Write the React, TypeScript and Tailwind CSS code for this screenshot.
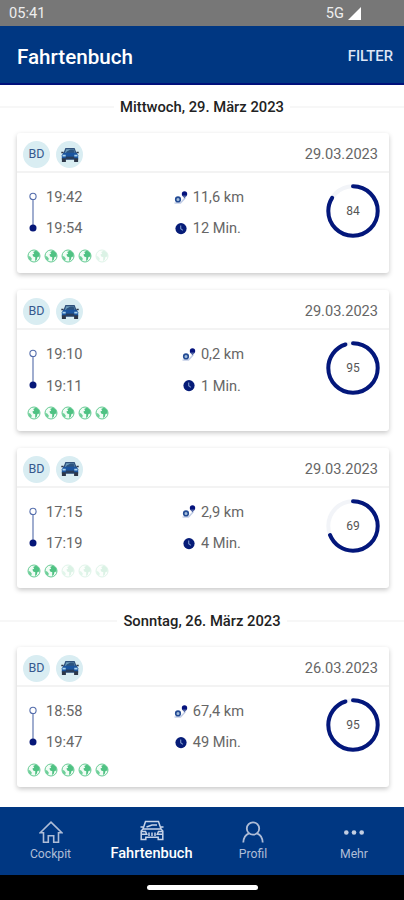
import { clsx } from "clsx";

const days = [
  {
    label: "Mittwoch, 29. März 2023",
    trips: [
      { date: "29.03.2023", start: "19:42", end: "19:54", distance: "11,6 km", duration: "12 Min.", score: 84, eco: 4 },
      { date: "29.03.2023", start: "19:10", end: "19:11", distance: "0,2 km", duration: "1 Min.", score: 95, eco: 5 },
      { date: "29.03.2023", start: "17:15", end: "17:19", distance: "2,9 km", duration: "4 Min.", score: 69, eco: 2 },
    ],
  },
  {
    label: "Sonntag, 26. März 2023",
    trips: [
      { date: "26.03.2023", start: "18:58", end: "19:47", distance: "67,4 km", duration: "49 Min.", score: 95, eco: 5 },
    ],
  },
];

type Trip = (typeof days)[number]["trips"][number];

function CarBadge() {
  return (
    <svg viewBox="0 0 18 16" className="h-4 w-[18px]">
      <path d="M4.4 1h9.2l2 5H2.4z" fill="#31527c" />
      <path d="M5.2 2.2h7.6l1.2 3.7H4z" fill="#6f9fbd" />
      <path d="M5.6 4.4 9.5 2.4h3.1l1 3.5H5z" fill="#2c5480" />
      <path d="M2.3 5.8h13.4l1.5 2.4v4.3H.8V8.2z" fill="#1b559f" />
      <path d="M.3 4.8h2.2v1.5H.3zM15.5 4.8h2.2v1.5h-2.2zM.9 11.2h4V15h-4zM13.1 11.2h4V15h-4z" fill="#2d3748" />
      <path d="M4.8 9.6h8.4v2.9H4.8z" fill="#283e5c" />
      <path d="M1.5 7.8h3.2v1.7H1.5zM13.3 7.8h3.2v1.7h-3.2z" fill="#a9d3ed" />
    </svg>
  );
}

function RouteIcon() {
  return (
    <svg viewBox="0 0 14 14" className="size-3.5">
      <path d="M.5 12h6l4.8-5.2" fill="none" stroke="#c3cee6" strokeWidth="1.6" />
      <circle cx="4" cy="8.4" r="2.3" fill="#a3bddb" stroke="#234b94" strokeWidth="1.6" />
      <circle cx="10.5" cy="3" r="2.7" fill="#05137d" />
      <path d="m8.2 4.6 2.3 2.9 2.3-2.9z" fill="#5366a5" />
    </svg>
  );
}

function ClockIcon() {
  return (
    <svg viewBox="0 0 14 14" className="size-3.5">
      <circle cx="7" cy="6.6" r="5.6" fill="#061c78" />
      <path d="M6.7 3.4v3.4l2.2 1.6" fill="none" stroke="#7f99cb" strokeWidth="1.1" />
    </svg>
  );
}

function Globe({ active }: { active: boolean }) {
  return (
    <svg viewBox="0 0 14 14" className={clsx("size-3.5", !active && "opacity-20")}>
      <circle cx="7" cy="7" r="6" fill="#f1fcf5" stroke="#66cb94" strokeWidth="1" />
      <path d="M6.2 3.1 9 1.5l3.1 2.6.6 3.5-2.2.4-.8 3-1.6.9.2-3.7-2.1-.8-.8-1.8 1.8-.8z" fill="#4fc283" />
      <path d="m1.2 6.7 2 .9 1.6 2-.6 2.3-2.1-1.6z" fill="#6fd09a" />
    </svg>
  );
}

function ScoreRing({ score }: { score: number }) {
  return (
    <svg viewBox="0 0 56 56" className="size-14">
      <circle cx="28" cy="28" r="24.7" fill="none" stroke="#f2f4f8" strokeWidth="4" />
      <circle
        cx="28"
        cy="28"
        r="24.7"
        fill="none"
        stroke="#03177b"
        strokeWidth="4"
        strokeLinecap="round"
        pathLength={100}
        strokeDasharray={`${score} 100`}
        transform="rotate(-90 28 28)"
      />
      <text x="28" y="32.3" textAnchor="middle" fontSize="12" fill="#555">
        {score}
      </text>
    </svg>
  );
}

function TripCard({ trip }: { trip: Trip }) {
  return (
    <article className="h-[140.3px] rounded-[3px] bg-white shadow-[0_2px_5px_rgba(0,0,0,0.22)]">
      <div className="flex h-10 items-center border-b-2 border-[#f3f3f3] pt-[5px] pr-[11px] pl-1.5">
        <span className="flex size-[27px] items-center justify-center rounded-full bg-[#d9edf2] text-[12.5px] text-[#36598e]">
          BD
        </span>
        <span className="ml-1.5 flex size-[27px] items-center justify-center rounded-full bg-[#d9edf2]">
          <CarBadge />
        </span>
        <span className="ml-auto pt-px text-[14.6px]">{trip.date}</span>
      </div>
      <div className="flex h-[73px] pt-[9px] pr-2 text-[14.6px]">
        <svg viewBox="0 0 10 42" className="mt-[9px] ml-[11px] h-[42px] w-2.5">
          <path d="M5 6v30" stroke="#6d82b6" strokeWidth="1.3" />
          <circle cx="5" cy="5.4" r="3.1" fill="#fff" stroke="#556eac" strokeWidth="1.1" />
          <circle cx="5" cy="37" r="3.5" fill="#061778" />
        </svg>
        <div className="ml-2 w-16 leading-[31.3px]">
          <p>{trip.start}</p>
          <p>{trip.end}</p>
        </div>
        <div className="ml-auto leading-[31.3px]">
          <p className="flex items-center gap-[5px]"><RouteIcon />{trip.distance}</p>
          <p className="flex items-center gap-[5px]"><ClockIcon />{trip.duration}</p>
        </div>
        <div className="ml-[81px] pt-px">
          <ScoreRing score={trip.score} />
        </div>
      </div>
      <div className="flex gap-[3px] pt-[3px] pl-2.5">
        {[1, 2, 3, 4, 5].map((n) => (
          <Globe key={n} active={n <= trip.eco} />
        ))}
      </div>
    </article>
  );
}

function BottomNav() {
  return (
    <nav className="grid h-[68px] shrink-0 grid-cols-4 bg-[#003782] text-[12.2px] text-[#afbdd7]">
      <div className="flex flex-col items-center">
        <svg viewBox="0 0 24 24" className="mt-[13px] size-6" fill="none" stroke="currentColor" strokeWidth="1.6">
          <path d="M1.2 12.8 12 2.2l10.8 10.6H19.5v9.5h-4.8v-6.5H9.3v6.5H4.5v-9.5z" />
        </svg>
        <span className="mt-0.5 leading-4">Cockpit</span>
      </div>
      <div className="flex flex-col items-center text-white">
        <svg viewBox="0 0 24 22" className="mt-[13px] h-[22px] w-6" fill="none" stroke="#c7d4e9" strokeWidth="1.5">
          <path d="M5.5 1.5h13L21 9H3zM3 9 1.2 11v8.5h4.6v-2.3h12.4v2.3h4.6V11L21 9M6.5 7 12 5h5M.5 7H3M21 7h2.5" />
          <path d="M1.5 11.5h4l1.2 2.8H1.5M22.5 11.5h-4l-1.2 2.8h5.2M9 12.5v3.5M12 12.5v3.5M15 12.5v3.5" />
        </svg>
        <span className="mt-0.5 text-[14.6px] leading-[18px] font-medium">Fahrtenbuch</span>
      </div>
      <div className="flex flex-col items-center pl-px">
        <svg viewBox="0 0 24 24" className="mt-[13px] size-6" fill="none" stroke="currentColor" strokeWidth="1.8">
          <circle cx="12" cy="8.5" r="6.2" />
          <path d="M2.3 22.5c.2-4.8 2.5-8 5.7-9.2m8 0c3.2 1.2 5.5 4.4 5.7 9.2" />
        </svg>
        <span className="mt-0.5 leading-4">Profil</span>
      </div>
      <div className="flex flex-col items-center pl-px">
        <svg viewBox="0 0 24 24" className="mt-[13px] size-6" fill="#c2cee2">
          <circle cx="4.3" cy="12.5" r="2.3" />
          <circle cx="12" cy="12.5" r="2.3" />
          <circle cx="19.7" cy="12.5" r="2.3" />
        </svg>
        <span className="mt-0.5 leading-4">Mehr</span>
      </div>
    </nav>
  );
}

export default function App() {
  return (
    <div className="flex h-[900px] w-[404px] flex-col overflow-hidden bg-white font-['Roboto',sans-serif] text-[#666]">
      <div className="flex h-[26px] shrink-0 items-center bg-[#777] pr-[43px] pl-[9px] text-[14.6px] text-[#eee]">
        <span className="pt-0.5">05:41</span>
        <span className="ml-auto pt-px">5G</span>
        <svg viewBox="0 0 13 13" className="ml-1 size-[13px]">
          <path d="M13 0v13H0z" fill="#fff" />
        </svg>
      </div>
      <header className="flex h-[59px] shrink-0 items-center justify-between border-b-2 border-[#00107a] bg-[#003782] pr-[11px] pl-[17px] text-white">
        <h1 className="pt-[5px] text-[20.6px] font-medium">Fahrtenbuch</h1>
        <button className="pt-1 text-[14.8px] font-medium text-[#dde5f5]">FILTER</button>
      </header>

      <main className="h-[722px] shrink-0">
        {days.map((day) => (
          <section key={day.label}>
            <div className="flex items-center gap-[6px] pt-[11px]">
              <span className="h-0.5 flex-1 bg-[#f7f7f7]" />
              <h2 className="pt-px text-[14.75px] leading-[21px] font-medium text-[#222]">{day.label}</h2>
              <span className="h-0.5 flex-1 bg-[#f7f7f7]" />
            </div>
            <div className="flex flex-col gap-[17px] pt-[15px] pr-[15px] pb-[11px] pl-[17px]">
              {day.trips.map((trip) => (
                <TripCard key={trip.start} trip={trip} />
              ))}
            </div>
          </section>
        ))}
      </main>

      <BottomNav />
      <div className="flex h-[25px] shrink-0 justify-center bg-black pt-2.5">
        <span className="h-[5px] w-[111px] rounded-full bg-white" />
      </div>
    </div>
  );
}
